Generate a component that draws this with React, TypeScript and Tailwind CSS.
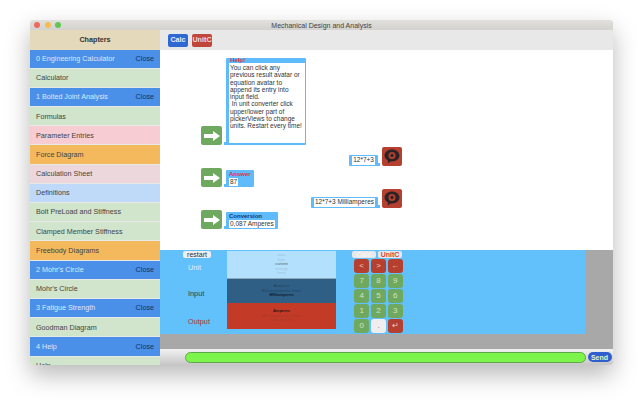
const chapters = [
  { label: '0 Engineering Calculator', tone: 'head' },
  { label: 'Calculator', tone: 'green' },
  { label: '1 Bolted Joint Analysis', tone: 'head' },
  { label: 'Formulas', tone: 'green' },
  { label: 'Parameter Entries', tone: 'pink' },
  { label: 'Force Diagram', tone: 'orange' },
  { label: 'Calculation Sheet', tone: 'rose' },
  { label: 'Definitions', tone: 'blue' },
  { label: 'Bolt PreLoad and Stiffness', tone: 'green' },
  { label: 'Clamped Member Stiffness', tone: 'green' },
  { label: 'Freebody Diagrams', tone: 'orange' },
  { label: "2 Mohr's Circle", tone: 'head' },
  { label: "Mohr's Circle", tone: 'green' },
  { label: '3 Fatigue Strength', tone: 'head' },
  { label: 'Goodman Diagram', tone: 'green' },
  { label: '4 Help', tone: 'head' },
  { label: 'Help', tone: 'green' },
];

const toneClass: Record<string, string> = {
  head: 'bg-[#4a90e9] text-[#dce9fb]',
  green: 'bg-[#d0e5cc] text-[#444]',
  pink: 'bg-[#f7ccd3] text-[#444]',
  orange: 'bg-[#f5b95d] text-[#444]',
  rose: 'bg-[#ecd7dc] text-[#444]',
  blue: 'bg-[#bfd9f8] text-[#444]',
};

function GreenAvatar() {
  return (
    <div className="flex h-[19px] w-[21px] shrink-0 items-center justify-center rounded-[2px] bg-[#6fa85f]">
      <svg width="16" height="10" viewBox="0 0 16 10">
        <path d="M0 3h9V0l7 5-7 5V7H0z" fill="#fff" />
      </svg>
    </div>
  );
}

function RedAvatar() {
  return (
    <div className="flex h-[19px] w-5 shrink-0 items-center justify-center rounded-[2px] bg-[#b5402f]">
      <svg width="16" height="15" viewBox="0 0 15 14">
        <path d="M7.5 0.5c3.900 0 7 2.500 7 5.600s-3.100 5.600-7 5.600c-.5 0-1 0-1.400-.1L3.500 13.500l.2-2.800C1.800 9.700.5 8 .5 6.100.5 3 3.600.5 7.500.5z" fill="#2b2326" />
        <circle cx="7.500" cy="6" r="3.300" fill="#b5402f" />
        <circle cx="7.500" cy="6" r="1.500" fill="#2b2326" />
      </svg>
    </div>
  );
}

function Bubble({ children, side }: { children: React.ReactNode; side: 'left' | 'right' }) {
  return (
    <div className="relative rounded-[1px] bg-[#5fbbfb] px-[3px] py-[1px]">
      <span
        className={`absolute bottom-0 h-[3px] w-[3px] bg-[#5fbbfb] ${side === 'left' ? 'left-[-2px]' : 'right-[-2px]'}`}
      />
      {children}
    </div>
  );
}

function Key({ label, tone = 'green' }: { label: string; tone?: 'green' | 'red' | 'white' }) {
  const cls =
    tone === 'green'
      ? 'bg-[#6fa85f] text-[#cfe2c8]'
      : tone === 'red'
        ? 'bg-[#b5402f] text-[#f0d0ca]'
        : 'bg-[#eeeeee] text-[#777]';
  return (
    <div className={`flex h-[14px] items-center justify-center rounded-[3px] text-[8px] ${cls}`}>
      {label}
    </div>
  );
}

export default function App() {
  return (
    <div
      className="h-[402px] w-[643px] overflow-hidden bg-white pl-[30px] pt-5 text-[7.200px] leading-none"
      style={{ fontFamily: '"Liberation Sans", Arial, sans-serif' }}
    >
      <div className="flex h-[345px] w-[583px] flex-col overflow-hidden rounded-[3px] bg-white shadow-[0_10px_24px_rgba(0,0,0,0.28)] blur-[0.35px]">
        {/* TITLE BAR */}
        <div className="relative flex h-[10px] shrink-0 items-center justify-center bg-gradient-to-b from-[#e2e0dd] to-[#d4d2cf] text-[7px] text-[#444]">
          <div className="absolute left-[4px] top-[2px] flex gap-[4.500px]">
            <span className="h-[6px] w-[6px] rounded-full bg-[#ee6a5f]" />
            <span className="h-[6px] w-[6px] rounded-full bg-[#f5bd4f]" />
            <span className="h-[6px] w-[6px] rounded-full bg-[#62c655]" />
          </div>
          Mechanical Design and Analysis
        </div>

        <div className="flex min-h-0 flex-1">
          {/* SIDEBAR */}
          <aside className="w-[130px] shrink-0 overflow-hidden">
            <div className="flex h-[19.500px] items-center justify-center bg-[#e4d9bb] font-bold text-[#333]">
              Chapters
            </div>
            {chapters.map((c) => (
              <div
                key={c.label}
                className={`flex h-[19.200px] items-center justify-between border-b border-[#e8e8e8] px-[6px] ${toneClass[c.tone]}`}
              >
                <span>{c.label}</span>
                {c.tone === 'head' && <span className="text-[#16305a]">Close</span>}
              </div>
            ))}
          </aside>

          <main className="flex min-w-0 flex-1 flex-col">
            {/* TOOLBAR */}
            <div className="flex h-[20px] shrink-0 items-center gap-[4px] bg-[#e8e8e8] pl-2">
              <div className="flex h-[13px] w-5 items-center justify-center rounded-[2px] bg-[#2f68d0] font-bold text-[#e6eefc]">
                Calc
              </div>
              <div className="flex h-[13px] w-5 items-center justify-center rounded-[2px] bg-[#c0453a] font-bold text-[#f5dcd8]">
                UnitC
              </div>
            </div>

            {/* CHAT */}
            <div className="flex h-[200px] shrink-0 flex-col gap-[2px] overflow-hidden bg-white pl-[41px] pr-[211px] pt-2">
              <div className="flex items-end gap-[4px]">
                <GreenAvatar />
                <div className="relative h-[87px] w-[80px] rounded-[1px] bg-[#5fbbfb] pb-[2px] pl-[3px] pr-[1.500px] pt-[5px]">
                  <span className="absolute bottom-0 left-[-2px] h-[3px] w-[3px] bg-[#5fbbfb]" />
                  <div className="absolute left-[4px] top-[-1px] text-[6px] font-bold text-[#d9363e]">Help!</div>
                  <div className="h-full whitespace-pre bg-white pl-[1px] pt-[1px] text-[6.500px] leading-[7.300px] text-[#333]">
                    {'You can click any\nprevious result avatar or\nequation avatar to\nappend its entry into\ninput field.\n In unit converter click\nupper/lower part of\npickerViews to change\nunits. Restart every time!'}
                  </div>
                </div>
              </div>
              <div className="flex items-end justify-end gap-[4px]">
                <Bubble side="right">
                  <div className="bg-white px-[1px] py-[1.500px] text-[6.500px] text-[#333]">12*7+3</div>
                </Bubble>
                <RedAvatar />
              </div>
              <div className="flex items-end gap-[4px]">
                <GreenAvatar />
                <Bubble side="left">
                  <div className="mb-[1px] text-[6px] font-bold text-[#d9363e]">Answer</div>
                  <div className="w-fit bg-white px-[1px] py-[1px] text-[6.500px] text-[#333]">87</div>
                </Bubble>
              </div>
              <div className="flex items-end justify-end gap-[4px]">
                <Bubble side="right">
                  <div className="bg-white px-[1px] py-[1.500px] text-[6.500px] text-[#333]">12*7+3 Milliamperes</div>
                </Bubble>
                <RedAvatar />
              </div>
              <div className="flex items-end gap-[4px]">
                <GreenAvatar />
                <Bubble side="left">
                  <div className="mb-[1px] text-[6px] font-bold text-[#123a6b]">Conversion</div>
                  <div className="w-fit bg-white px-[1px] py-[1px] text-[6.500px] text-[#333]">0,087 Amperes</div>
                </Bubble>
              </div>
            </div>

            {/* CONVERTER */}
            <div className="min-h-0 flex-1 bg-[#a8a8a8]">
              <div className="flex h-[84px] w-[425px] bg-[#62c0fb]">
                <div className="flex w-[67px] shrink-0 flex-col items-start pl-[28px] pt-[1px] text-[7.300px]">
                  <div className="ml-[-5px] flex h-[7px] w-[28px] items-center justify-center rounded-[2px] bg-[#eeeeee] text-[7px] text-[#333]">
                    restart
                  </div>
                  <div className="mt-[6px] text-[#dff2ff]">Unit</div>
                  <div className="mt-[19px] text-[#164a5c]">Input</div>
                  <div className="mt-[20px] text-[#b5303a]">Output</div>
                </div>
                <div className="flex w-[109px] shrink-0 flex-col pt-[1px] text-center text-[4px] leading-[4.500px]">
                  <div className="flex h-[27px] flex-col justify-center bg-[#b3e0fd] text-[#9fc4dc]">
                    <span>area</span>
                    <span>byte</span>
                    <span className="text-[#44606f]">current</span>
                    <span>energy</span>
                    <span>force</span>
                  </div>
                  <div className="flex h-[25px] flex-col justify-center border-t border-[#8fa8ba] bg-[#2f5f85] text-[#1f4464]">
                    <span>Amperes</span>
                    <span>Electromagnetic Units</span>
                    <span className="font-bold text-[#10202e]">Milliamperes</span>
                  </div>
                  <div className="flex h-[26px] flex-col justify-center bg-[#c33a26] text-[#a83a2c]">
                    <span className="font-bold text-[#3a1410]">Amperes</span>
                    <span>Electromagnetic Units</span>
                    <span>Milliamperes</span>
                  </div>
                </div>
                <div className="ml-[16px] w-[50px] shrink-0 pt-[1px]">
                  <div className="mb-[1px] flex h-[7px] gap-[2px] text-[7px] font-bold">
                    <div className="flex w-6 items-center justify-center rounded-[2px] bg-[#e8e8e8] text-[#f5f5f5]">Calc</div>
                    <div className="flex w-6 items-center justify-center rounded-[2px] bg-[#e8e8e8] text-[#d9453a]">UnitC</div>
                  </div>
                  <div className="ml-[2px] grid w-[49px] grid-cols-3 gap-x-[1.500px] gap-y-[1px]">
                    <Key label="<" tone="red" />
                    <Key label=">" tone="red" />
                    <Key label="←" tone="red" />
                    <Key label="7" />
                    <Key label="8" />
                    <Key label="9" />
                    <Key label="4" />
                    <Key label="5" />
                    <Key label="6" />
                    <Key label="1" />
                    <Key label="2" />
                    <Key label="3" />
                    <Key label="0" />
                    <Key label="." tone="white" />
                    <Key label="↵" tone="red" />
                  </div>
                </div>
              </div>
            </div>

            {/* INPUT BAR */}
            <div className="flex h-4 shrink-0 items-center bg-gradient-to-b from-[#f2f2f2] to-[#c6c6c6] pl-[25px]">
              <div className="h-[11px] w-[401px] rounded-full border border-[#5fa84a] bg-[#7cf44c]" />
              <div className="ml-[1.500px] flex h-[10px] w-[24px] items-center justify-center rounded-full bg-[#2f5fcf] text-[7px] font-bold text-[#eef2c8]">
                Send
              </div>
            </div>
          </main>
        </div>
      </div>
    </div>
  );
}
